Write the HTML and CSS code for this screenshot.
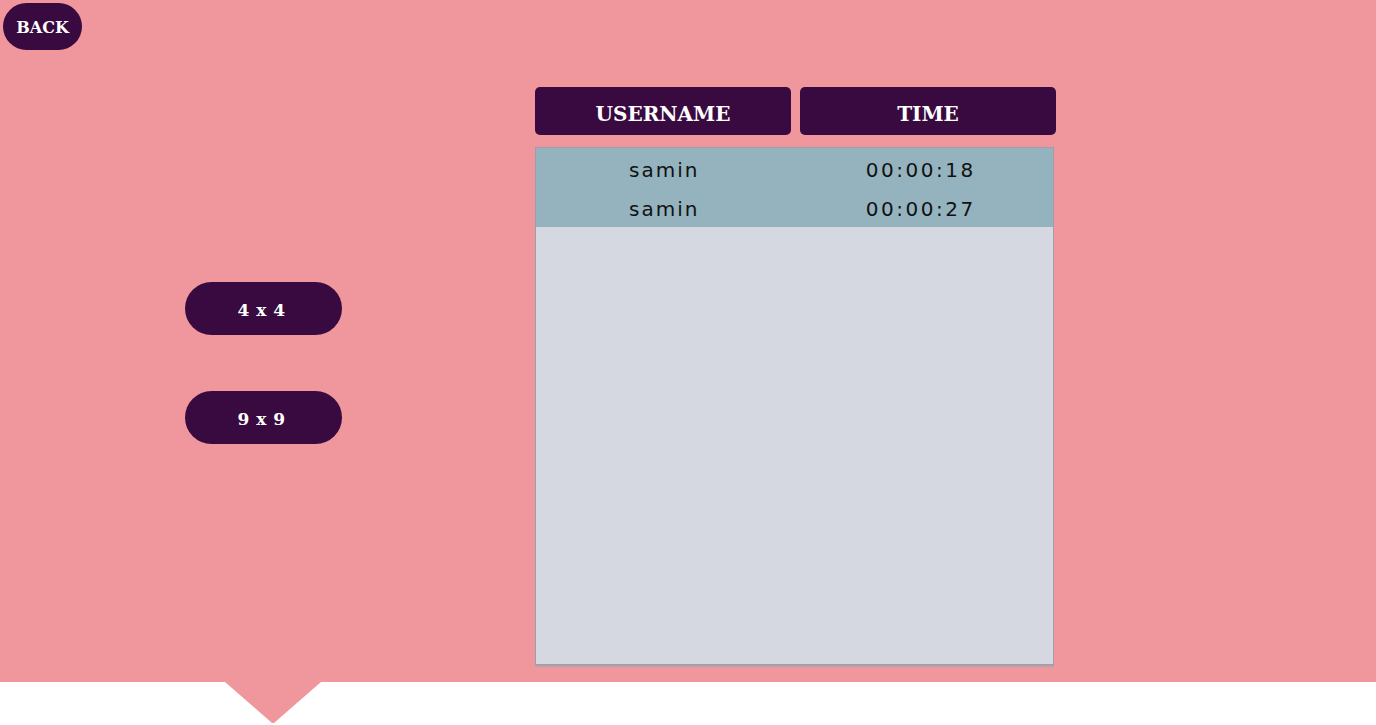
FILE: index.html
```html
<!DOCTYPE html>
<html>
<head>
<meta charset="utf-8">
<link rel="stylesheet" href="styles.css">
</head>
<body>
<section class="stage">
  <button class="back">BACK</button>
  <div class="content">
    <div class="levels">
      <button class="level">4 x 4</button>
      <button class="level">9 x 9</button>
    </div>
    <div class="scores">
      <div class="heads">
        <div class="head">USERNAME</div>
        <div class="head">TIME</div>
      </div>
      <div class="board">
        <div class="row"><span class="cell">samin</span><span class="cell time">00:00:18</span></div>
        <div class="row"><span class="cell">samin</span><span class="cell time">00:00:27</span></div>
      </div>
    </div>
  </div>
</section>
<div class="pointer"></div>
</body>
</html>
```

FILE: styles.css
```css
html, body {
  margin: 0;
  padding: 0;
  background: #ffffff;
}

.stage {
  height: 682px;
  background: #ef979c;
  padding: 3px 0 0 0;
  box-sizing: border-box;
}

.pointer {
  width: 96px;
  height: 41px;
  margin-left: 225px;
  background: #ef979c;
  clip-path: polygon(0 0, 100% 0, 51% 100%, 49% 100%);
}

.back {
  display: block;
  margin-left: 3px;
  width: 79px;
  height: 47px;
  border: none;
  border-radius: 24px;
  background: #390a40;
  color: #ffffff;
  font-family: "DejaVu Serif", serif;
  font-weight: bold;
  font-size: 16px;
  padding: 2px 0 0 0;
  cursor: pointer;
}

.content {
  display: flex;
  margin-top: 37px;
}

.levels {
  width: 350px;
  padding-left: 185px;
  padding-top: 195px;
  display: flex;
  flex-direction: column;
  align-items: flex-start;
  gap: 56px;
}

.level {
  width: 157px;
  height: 53px;
  border: none;
  border-radius: 27px;
  background: #390a40;
  color: #ffffff;
  font-family: "DejaVu Serif", serif;
  font-weight: bold;
  font-size: 17px;
  letter-spacing: 0.5px;
  padding: 2px 4px 0 0;
  cursor: pointer;
}

.scores {
  width: 521px;
  display: flex;
  flex-direction: column;
  gap: 12px;
}

.heads {
  display: flex;
  gap: 9px;
}

.head {
  flex: 1;
  height: 48px;
  box-sizing: border-box;
  padding-top: 5px;
  border-radius: 5px;
  background: #390a40;
  color: #ffffff;
  font-family: "DejaVu Serif", serif;
  font-weight: bold;
  font-size: 20px;
  display: flex;
  align-items: center;
  justify-content: center;
}

.board {
  width: 519px;
  height: 518px;
  box-sizing: border-box;
  border: 1px solid #a09ca8;
  background: #d5d8e1;
  box-shadow: 0 2px 0 #b3a1ab;
}

.row {
  display: flex;
  height: 39.5px;
  box-sizing: border-box;
  padding-top: 4px;
  background: #94b3be;
  align-items: center;
}

.cell {
  flex: 1;
  text-align: center;
  font-family: "DejaVu Sans", sans-serif;
  font-size: 20px;
  letter-spacing: 2px;
  color: #111111;
}

.cell.time {
  letter-spacing: 2.5px;
  padding-right: 4px;
}
```
